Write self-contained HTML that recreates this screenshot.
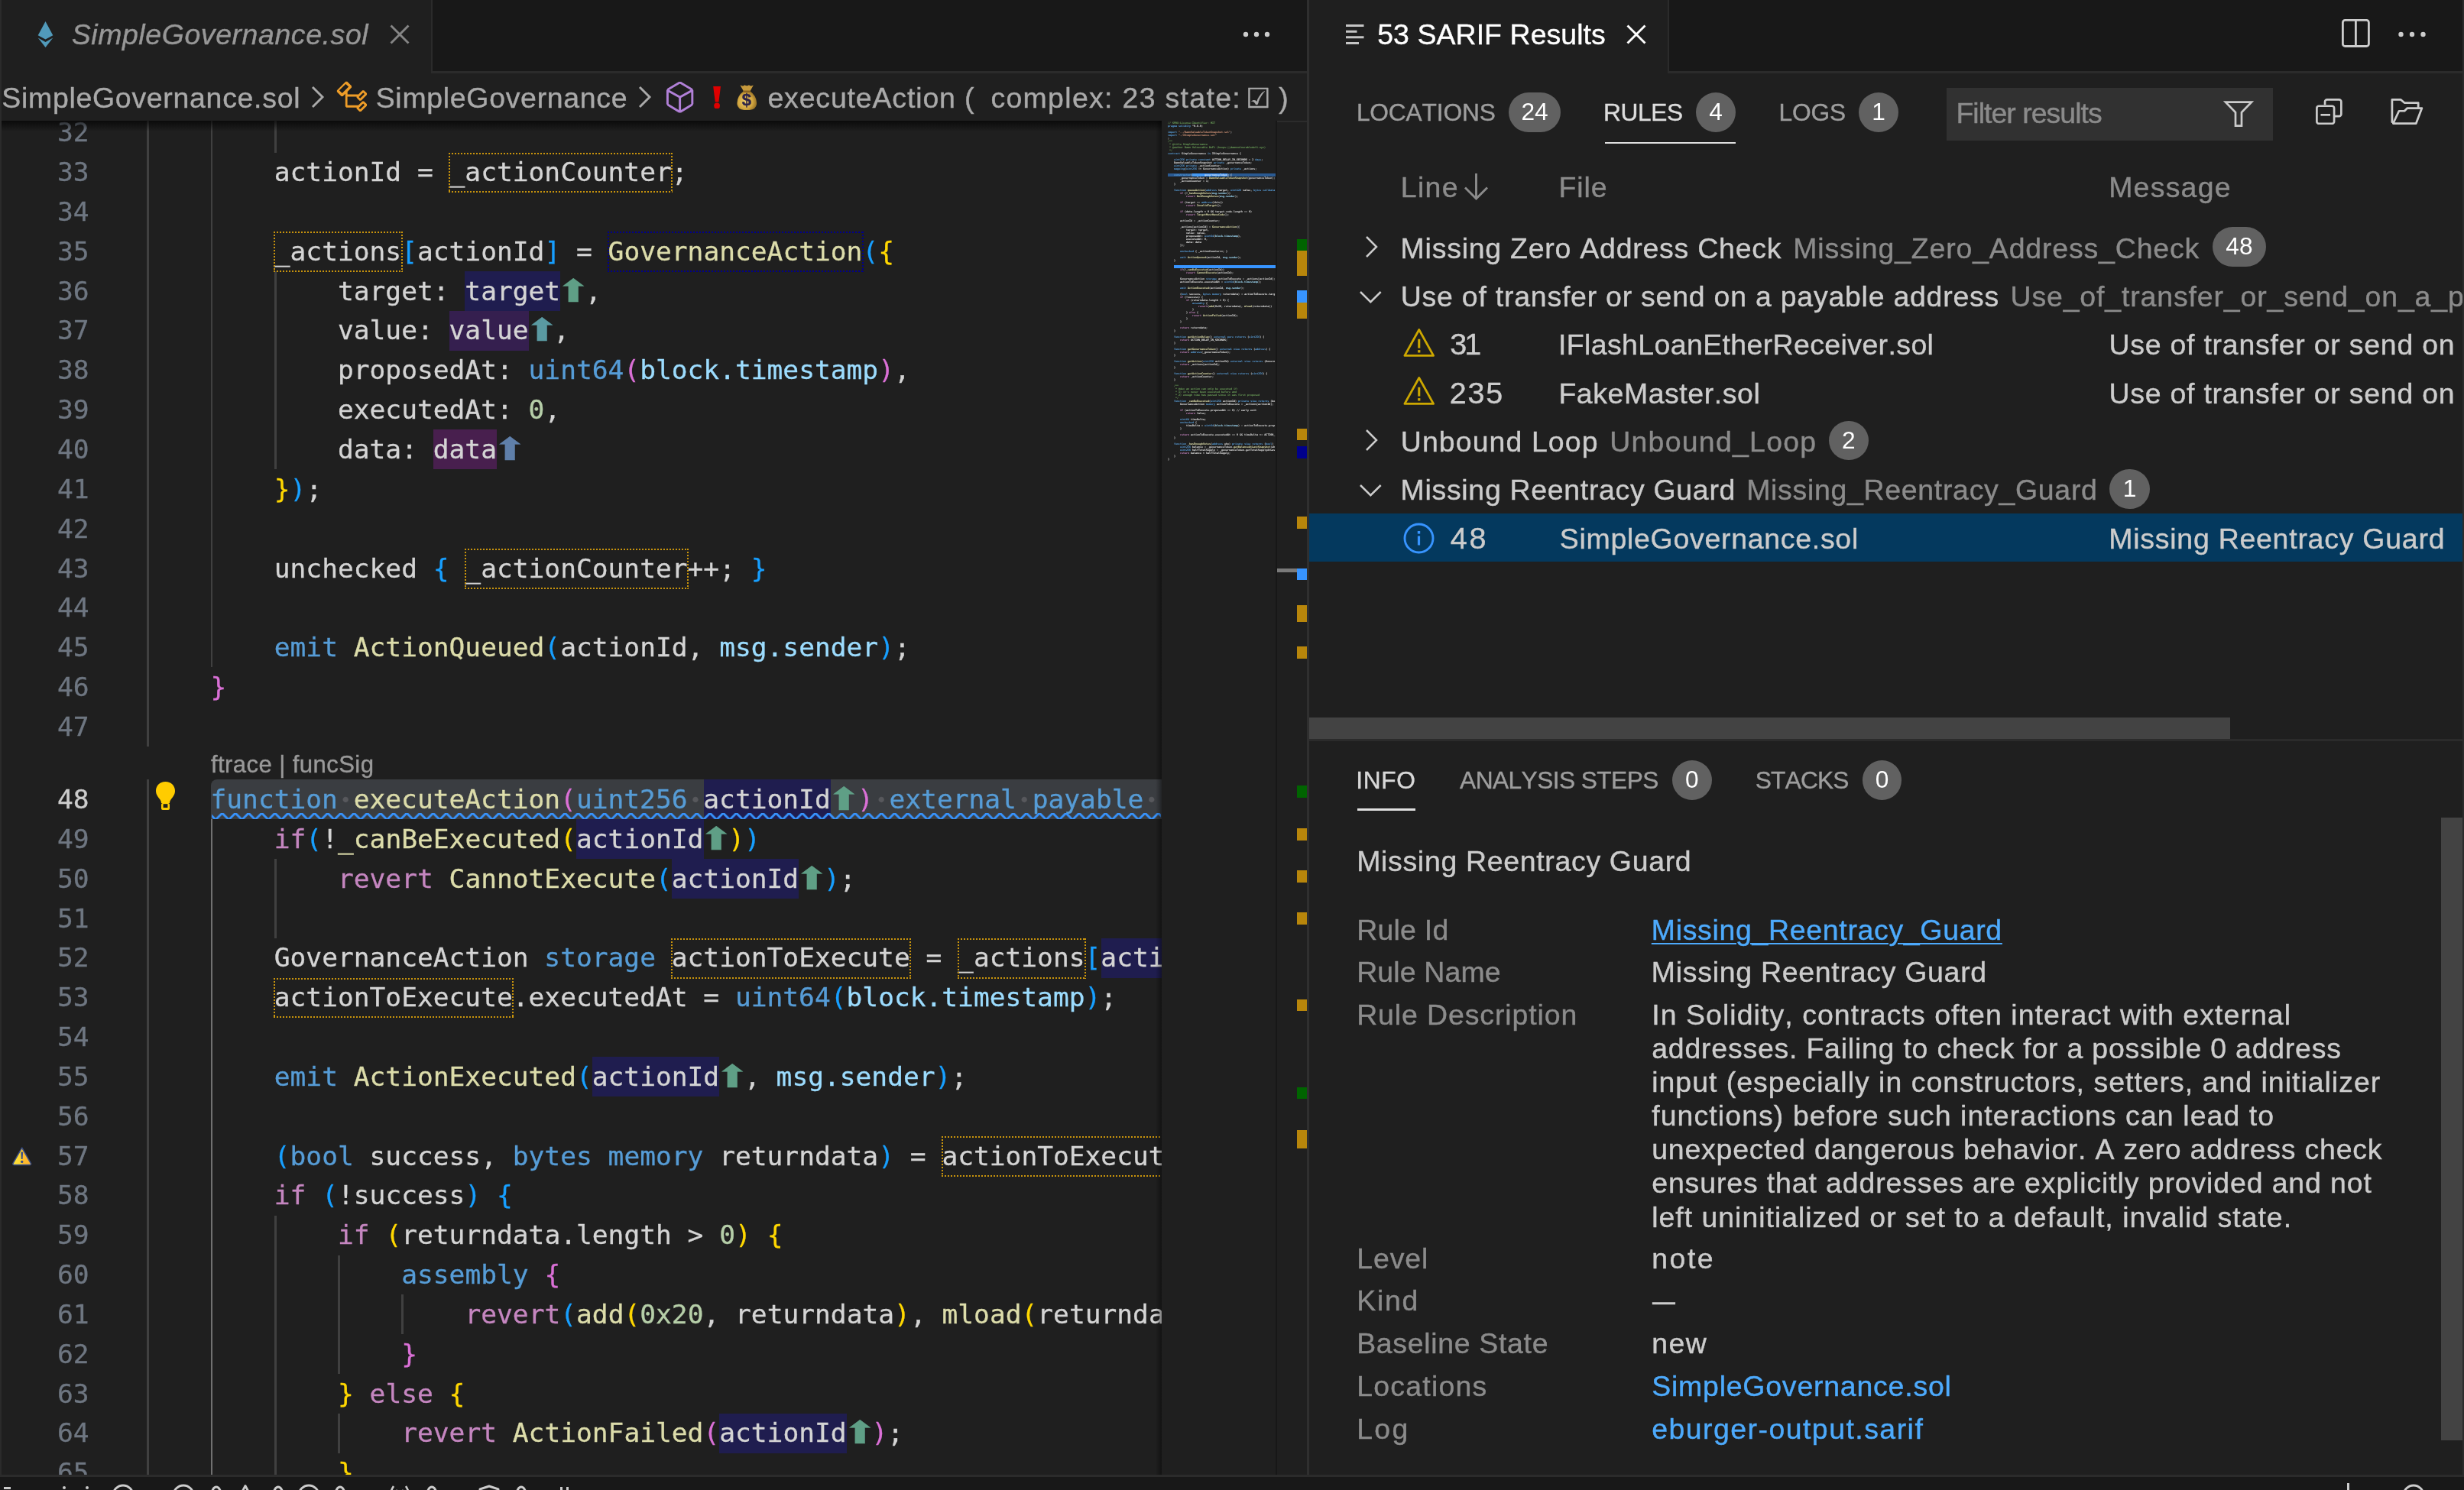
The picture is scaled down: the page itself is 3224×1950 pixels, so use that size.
<!DOCTYPE html>
<html lang="en"><head><meta charset="utf-8"><title>SimpleGovernance.sol</title>
<style>
*{box-sizing:border-box;margin:0;padding:0}
html,body{width:3224px;height:1950px;overflow:hidden;background:#1f1f1f}
body{will-change:transform;position:relative;font-family:"Liberation Sans",sans-serif;font-kerning:none;color:#ccc}
.abs,.t,.ic,.ln,.cl,.g,.bx{position:absolute}
.t{white-space:nowrap;-webkit-text-stroke:0.4px}
.bx{display:block}
.mono,.ln,.cl{font-family:"DejaVu Sans Mono","Liberation Mono",monospace;font-size:34.56px;line-height:51.84px;white-space:pre;height:51.84px}
.ln,.cl{padding-top:0.6px;-webkit-text-stroke:0.3px}
.ln{left:0;width:116.5px;text-align:right;color:#6e7681}
.ln.act{color:#ccc}
.cl{color:#d4d4d4}
.k{color:#569cd6}.f{color:#dcdcaa}.c{color:#c586c0}.v{color:#9cdcfe}.n{color:#b5cea8}
.b1{color:#ffd700}.b2{color:#da70d6}.b3{color:#179fff}
.ws{color:#57585c;display:inline-block;width:20.807px;height:51.84px;vertical-align:top;text-align:center;font-family:"Liberation Serif",serif;font-size:60px;line-height:51px}
.db{position:absolute;background:
 repeating-linear-gradient(90deg,var(--c) 0 2px,transparent 2px 4px) top left/100% 2px no-repeat,
 repeating-linear-gradient(90deg,var(--c) 0 2px,transparent 2px 4px) bottom left/100% 2px no-repeat,
 repeating-linear-gradient(180deg,var(--c) 0 2px,transparent 2px 4px) top left/2px 100% no-repeat,
 repeating-linear-gradient(180deg,var(--c) 0 2px,transparent 2px 4px) top right/2px 100% no-repeat}
.ar{display:inline-block;width:32.8px;text-align:center;vertical-align:top;height:51.84px;line-height:51.84px;font-family:"DejaVu Sans",sans-serif;font-size:41px}
.ar span{display:inline-block;transform:scaleX(1.35);line-height:51.84px}
.g{width:2.9px;background:#404040}
.g.ga{background:#707070}
.badge{position:absolute;height:51.8px;border-radius:26px;background:#616161;color:#fff;font-size:31.68px;line-height:51.8px;text-align:center}
#mm{position:absolute;z-index:0;left:1520px;top:158.6px;width:149.6px;height:1771.4px;overflow:hidden;font-family:"DejaVu Sans Mono","Liberation Mono",monospace;font-size:3.34px;line-height:4px;color:#e4e4e4;font-weight:bold}
#mm div{height:4px;padding-left:7.9px;width:149.6px;overflow:hidden;white-space:pre}
#mm .k{color:#5aa2e0}#mm .f{color:#e6e6b0}#mm .c{color:#d08acb}#mm .v{color:#a4e2ff}.mc{color:#70a85c}.ms{color:#d8987a}
</style></head>
<body>
<!-- left editor group -->
<div class="bx" style="left:0;top:0;width:1710px;height:93px;background:#181818"></div>
<div class="bx" style="left:0;top:93px;width:1710px;height:2.6px;background:#2b2b2b"></div>
<div class="bx" style="left:2px;top:0;width:564px;height:95.6px;background:#1f1f1f;border-right:2.6px solid #2b2b2b"></div>
<svg class="ic" style="left:49.0px;top:28.0px" width="21.0" height="34.0" viewBox="0 0 21 34" preserveAspectRatio="none" ><path d="M10.5 0 L20.3 18.2 L10.5 23.6 L0.7 18.2 Z" fill="#519aba"/><path d="M0.7 21.4 L10.5 27 L20.3 21.4 L10.5 34 Z" fill="#519aba"/></svg>
<div class="t " style="left:93.7px;top:21.4px;font-size:37.44px;line-height:48.67px;color:#979797;letter-spacing:0.603px;font-style:italic;">SimpleGovernance.sol</div>
<svg class="ic" style="left:509.3px;top:30.8px" width="28.0" height="28.0" viewBox="0 0 28 28" preserveAspectRatio="none" ><path d="M2.5 2.5 L25.5 25.5 M25.5 2.5 L2.5 25.5" stroke="#858585" stroke-width="2.9" fill="none"/></svg>
<svg class="ic" style="left:1624.0px;top:39.0px" width="42.0" height="12.0" viewBox="0 0 42 12" preserveAspectRatio="none" ><circle cx="6" cy="6" r="3.2" fill="#ccc"/><circle cx="20" cy="6" r="3.2" fill="#ccc"/><circle cx="34" cy="6" r="3.2" fill="#ccc"/></svg>
<div class="t " style="left:2.3px;top:103.7px;font-size:37.44px;line-height:48.67px;color:#a9a9a9;letter-spacing:0.723px;">SimpleGovernance.sol</div>
<svg class="ic" style="left:406.9px;top:112.2px" width="18.0" height="30.0" viewBox="0 0 18 30" preserveAspectRatio="none" ><path d="M2 2 L15 15 L2 28" stroke="#a9a9a9" stroke-width="2.9" fill="none"/></svg>
<svg class="ic" style="left:438.0px;top:104.1px" width="45.7" height="45.7" viewBox="0 0 16 16" preserveAspectRatio="none" ><path fill="#ee9d28" d="M11.34 9.71h.71l2.67-2.67v-.71L13.38 5h-.7l-1.82 1.81h-5V5.56l1.86-1.85V3l-2-2H5L1 5v.71l2 2h.71l1.14-1.15v5.79l.5.5H10v.52l1.33 1.34h.71l2.67-2.67v-.71L13.37 10h-.7l-1.86 1.85h-5v-4H10v.48l1.34 1.38zm1.69-3.65l.63.63-2 2-.63-.63 2-2zm-8-4l1.33 1.3-2.97 2.96-1.33-1.3 2.97-2.96zm8 9l.63.63-2 2-.63-.63 2-2z"/></svg>
<div class="t " style="left:491.7px;top:103.7px;font-size:37.44px;line-height:48.67px;color:#a9a9a9;letter-spacing:0.711px;">SimpleGovernance</div>
<svg class="ic" style="left:834.9px;top:112.2px" width="18.0" height="30.0" viewBox="0 0 18 30" preserveAspectRatio="none" ><path d="M2 2 L15 15 L2 28" stroke="#a9a9a9" stroke-width="2.9" fill="none"/></svg>
<svg class="ic" style="left:865.9px;top:103.8px" width="47.2" height="47.2" viewBox="0 0 16 16" preserveAspectRatio="none" ><path fill="#b180d7" d="M13.51 4l-5-3h-1l-5 3-.49.86v6l.49.85 5 3h1l5-3 .49-.85v-6L13.51 4zm-6 9.56l-4.5-2.7V5.7l4.5 2.45v5.41zM3.27 4.7l4.74-2.84 4.74 2.84-4.74 2.59L3.27 4.7zm9.74 6.16l-4.5 2.7V8.15l4.5-2.45v5.16z"/></svg>
<svg class="ic" style="left:933.4px;top:112.9px" width="10.2" height="29.4" viewBox="0 0 10.2 29.4" preserveAspectRatio="none" ><path d="M0.2 0 H10 L7.4 20.4 H2.8 Z" fill="#de0000"/><circle cx="5.1" cy="25.5" r="3.9" fill="#de0000"/></svg>
<svg class="ic" style="left:963.6px;top:109.8px" width="26.4" height="34.6" viewBox="0 0 26.4 34.6" preserveAspectRatio="none" ><defs><radialGradient id="mb" cx="0.42" cy="0.55" r="0.62"><stop offset="0" stop-color="#f1d06a"/><stop offset="0.6" stop-color="#d2a640"/><stop offset="1" stop-color="#8f6a22"/></radialGradient></defs><path d="M4.5 1.6 Q8 3.4 10.5 1.2 Q13.2 3.2 16 1.2 Q18.6 3.4 21.8 1.6 L17.4 9.6 H9 Z" fill="#c79a3c"/><path d="M9 9.2 H17.4 Q26.6 16 26 26.4 Q25 34.2 13.2 34.2 Q1.4 34.2 0.5 26.4 Q-0.2 16 9 9.2 Z" fill="url(#mb)"/><rect x="8.4" y="8.4" width="9.6" height="2.4" rx="1" fill="#8a6220"/></svg>
<div class="t" style="left:963.6px;top:120.2px;width:26.4px;text-align:center;font-size:22px;line-height:21px;font-weight:bold;color:#2c2348">$</div>
<div class="t " style="left:1004.4px;top:103.7px;font-size:37.44px;line-height:48.67px;color:#a9a9a9;letter-spacing:0.868px;">executeAction (</div>
<div class="t " style="left:1296.4px;top:103.7px;font-size:37.44px;line-height:48.67px;color:#a9a9a9;letter-spacing:1.334px;">complex: 23 state:</div>
<div class="t" style="left:1630.3px;top:104.5px;font-family:'DejaVu Sans',sans-serif;font-size:36px;line-height:48px;color:#a9a9a9">☑</div>
<div class="t " style="left:1673.3px;top:103.7px;font-size:37.44px;line-height:48.67px;color:#a9a9a9;letter-spacing:0.000px;">)</div>
<!-- editor -->
<div class="bx" id="ed" style="left:0;top:158.4px;width:1520px;height:1771.6px;overflow:hidden">
<div class="bx" style="left:0;top:-158.4px;width:1710px;height:1950px">
<div class="bx" style="left:275.5px;top:1020.42px;width:1245px;height:51.84px;background:#3a3d41;border-top-left-radius:8px"></div>
<div class="g" style="left:192.30px;top:147.68px;height:829.44px"></div>
<div class="g" style="left:192.30px;top:1020.42px;height:933.12px"></div>
<div class="g" style="left:275.53px;top:147.68px;height:725.76px"></div>
<div class="g ga" style="left:275.53px;top:1072.26px;height:881.28px"></div>
<div class="g" style="left:358.76px;top:147.68px;height:51.84px"></div>
<div class="g" style="left:358.76px;top:355.04px;height:259.20px"></div>
<div class="g" style="left:358.76px;top:1124.10px;height:103.68px"></div>
<div class="g" style="left:358.76px;top:1590.66px;height:362.88px"></div>
<div class="g" style="left:441.98px;top:1642.50px;height:155.52px"></div>
<div class="g" style="left:441.98px;top:1849.86px;height:51.84px"></div>
<div class="g" style="left:525.21px;top:1694.34px;height:51.84px"></div>
<div class="bx" style="left:608.4px;top:355.0px;width:124.8px;height:51.8px;background:#1f1d4f"></div>
<div class="bx" style="left:587.6px;top:406.9px;width:104.0px;height:51.8px;background:#351f4f"></div>
<div class="bx" style="left:566.8px;top:562.4px;width:83.2px;height:51.8px;background:#481f4e"></div>
<div class="bx" style="left:920.5px;top:1020.4px;width:166.5px;height:51.8px;background:#1f1d4f"></div>
<div class="bx" style="left:754.1px;top:1072.3px;width:166.5px;height:51.8px;background:#1f1d4f"></div>
<div class="bx" style="left:878.9px;top:1124.1px;width:166.5px;height:51.8px;background:#1f1d4f"></div>
<div class="bx" style="left:1440.7px;top:1227.8px;width:166.5px;height:51.8px;background:#1f1d4f"></div>
<div class="bx" style="left:774.9px;top:1383.3px;width:166.5px;height:51.8px;background:#1f1d4f"></div>
<div class="bx" style="left:941.4px;top:1849.9px;width:166.5px;height:51.8px;background:#1f1d4f"></div>
<div class="ln" style="top:147.68px">32</div>
<div class="ln" style="top:199.52px">33</div>
<div class="cl" style="top:199.52px;left:358.76px">actionId = _actionCounter;</div>
<div class="ln" style="top:251.36px">34</div>
<div class="ln" style="top:303.20px">35</div>
<div class="cl" style="top:303.20px;left:358.76px">_actions<span class="b3">[</span>actionId<span class="b3">]</span> = <span class="f">GovernanceAction</span><span class="b3">(</span><span class="b1">{</span></div>
<div class="ln" style="top:355.04px">36</div>
<div class="cl" style="top:355.04px;left:441.98px">target: target<span class="ar" style="color:#5f9f86"><span>⬆</span></span>,</div>
<div class="ln" style="top:406.88px">37</div>
<div class="cl" style="top:406.88px;left:441.98px">value: value<span class="ar" style="color:#5a9aa2"><span>⬆</span></span>,</div>
<div class="ln" style="top:458.72px">38</div>
<div class="cl" style="top:458.72px;left:441.98px">proposedAt: <span class="k">uint64</span><span class="b2">(</span><span class="v">block.timestamp</span><span class="b2">)</span>,</div>
<div class="ln" style="top:510.56px">39</div>
<div class="cl" style="top:510.56px;left:441.98px">executedAt: <span class="n">0</span>,</div>
<div class="ln" style="top:562.40px">40</div>
<div class="cl" style="top:562.40px;left:441.98px">data: data<span class="ar" style="color:#5f7fa9"><span>⬆</span></span></div>
<div class="ln" style="top:614.24px">41</div>
<div class="cl" style="top:614.24px;left:358.76px"><span class="b1">}</span><span class="b3">)</span>;</div>
<div class="ln" style="top:666.08px">42</div>
<div class="ln" style="top:717.92px">43</div>
<div class="cl" style="top:717.92px;left:358.76px">unchecked <span class="b3">{</span> _actionCounter++; <span class="b3">}</span></div>
<div class="ln" style="top:769.76px">44</div>
<div class="ln" style="top:821.60px">45</div>
<div class="cl" style="top:821.60px;left:358.76px"><span class="k">emit</span> <span class="f">ActionQueued</span><span class="b3">(</span>actionId, <span class="v">msg.sender</span><span class="b3">)</span>;</div>
<div class="ln" style="top:873.44px">46</div>
<div class="cl" style="top:873.44px;left:275.53px"><span class="b2">}</span></div>
<div class="ln" style="top:925.28px">47</div>
<div class="ln act" style="top:1020.42px">48</div>
<div class="cl" style="top:1020.42px;left:275.53px"><span class="k">function</span><span class="ws">·</span><span class="f">executeAction</span><span class="b2">(</span><span class="k">uint256</span><span class="ws">·</span>actionId<span class="ar" style="color:#5f9f86"><span>⬆</span></span><span style="display:inline-block;width:2.4px"></span><span class="b2">)</span><span class="ws">·</span><span class="k">external</span><span class="ws">·</span><span class="k">payable</span><span class="ws">·</span><span class="k">returns</span><span class="ws">·</span><span class="b2">(</span><span class="k">bytes</span><span class="ws">·</span><span class="k">memory</span><span class="ws">·</span>returndata<span class="b2">)</span><span class="ws">·</span><span class="b2">{</span></div>
<div class="ln" style="top:1072.26px">49</div>
<div class="cl" style="top:1072.26px;left:358.76px"><span class="c">if</span><span class="b3">(</span>!<span class="f">_canBeExecuted</span><span class="b1">(</span>actionId<span class="ar" style="color:#5f9f86"><span>⬆</span></span><span class="b1">)</span><span class="b3">)</span></div>
<div class="ln" style="top:1124.10px">50</div>
<div class="cl" style="top:1124.10px;left:441.98px"><span class="c">revert</span> <span class="f">CannotExecute</span><span class="b3">(</span>actionId<span class="ar" style="color:#5f9f86"><span>⬆</span></span><span class="b3">)</span>;</div>
<div class="ln" style="top:1175.94px">51</div>
<div class="ln" style="top:1227.78px">52</div>
<div class="cl" style="top:1227.78px;left:358.76px">GovernanceAction <span class="k">storage</span> actionToExecute = _actions<span class="b3">[</span>actionId<span class="ar" style="color:#5f9f86"><span>⬆</span></span><span class="b3">]</span>;</div>
<div class="ln" style="top:1279.62px">53</div>
<div class="cl" style="top:1279.62px;left:358.76px">actionToExecute.executedAt = <span class="k">uint64</span><span class="b3">(</span><span class="v">block.timestamp</span><span class="b3">)</span>;</div>
<div class="ln" style="top:1331.46px">54</div>
<div class="ln" style="top:1383.30px">55</div>
<div class="cl" style="top:1383.30px;left:358.76px"><span class="k">emit</span> <span class="f">ActionExecuted</span><span class="b3">(</span>actionId<span class="ar" style="color:#5f9f86"><span>⬆</span></span>, <span class="v">msg.sender</span><span class="b3">)</span>;</div>
<div class="ln" style="top:1435.14px">56</div>
<div class="ln" style="top:1486.98px">57</div>
<div class="cl" style="top:1486.98px;left:358.76px"><span class="b3">(</span><span class="k">bool</span> success, <span class="k">bytes</span> <span class="k">memory</span> returndata<span class="b3">)</span> = actionToExecute.target.call<span class="b3">{</span>value: actionToExecute.value<span class="b3">}</span><span class="b3">(</span>actionToExecute.data<span class="b3">)</span>;</div>
<div class="ln" style="top:1538.82px">58</div>
<div class="cl" style="top:1538.82px;left:358.76px"><span class="c">if</span> <span class="b3">(</span>!success<span class="b3">)</span> <span class="b3">{</span></div>
<div class="ln" style="top:1590.66px">59</div>
<div class="cl" style="top:1590.66px;left:441.98px"><span class="c">if</span> <span class="b1">(</span>returndata.length &gt; <span class="n">0</span><span class="b1">)</span> <span class="b1">{</span></div>
<div class="ln" style="top:1642.50px">60</div>
<div class="cl" style="top:1642.50px;left:525.21px"><span class="k">assembly</span> <span class="b2">{</span></div>
<div class="ln" style="top:1694.34px">61</div>
<div class="cl" style="top:1694.34px;left:608.44px"><span class="c">revert</span><span class="b3">(</span><span class="f">add</span><span class="b1">(</span><span class="n">0x20</span>, returndata<span class="b1">)</span>, <span class="f">mload</span><span class="b1">(</span>returndata<span class="b1">)</span><span class="b3">)</span></div>
<div class="ln" style="top:1746.18px">62</div>
<div class="cl" style="top:1746.18px;left:525.21px"><span class="b2">}</span></div>
<div class="ln" style="top:1798.02px">63</div>
<div class="cl" style="top:1798.02px;left:441.98px"><span class="b1">}</span> <span class="c">else</span> <span class="b1">{</span></div>
<div class="ln" style="top:1849.86px">64</div>
<div class="cl" style="top:1849.86px;left:525.21px"><span class="c">revert</span> <span class="f">ActionFailed</span><span class="b2">(</span>actionId<span class="ar" style="color:#5f9f86"><span>⬆</span></span><span class="b2">)</span>;</div>
<div class="ln" style="top:1901.70px">65</div>
<div class="cl" style="top:1901.70px;left:441.98px"><span class="b1">}</span></div>
<div class="db" style="left:587px;top:200px;width:293px;height:52px;--c:#c9940c"></div>
<div class="db" style="left:358px;top:303px;width:169px;height:53px;--c:#c9940c"></div>
<div class="db" style="left:795px;top:303px;width:335px;height:53px;--c:#00008b"></div>
<div class="db" style="left:608px;top:718px;width:293px;height:53px;--c:#c9940c"></div>
<div class="db" style="left:878px;top:1228px;width:314px;height:53px;--c:#c9940c"></div>
<div class="db" style="left:1253px;top:1228px;width:168px;height:53px;--c:#c9940c"></div>
<div class="db" style="left:358px;top:1280px;width:314px;height:52px;--c:#c9940c"></div>
<div class="db" style="left:1232px;top:1487px;width:314px;height:53px;--c:#c9940c"></div>
<div class="db" style="left:1960px;top:1487px;width:314px;height:53px;--c:#c9940c"></div>
<div class="db" style="left:2439px;top:1487px;width:314px;height:53px;--c:#c9940c"></div>
<div class="t " style="left:275.9px;top:980.6px;font-size:31.10px;line-height:40.43px;color:#999;letter-spacing:0.418px;">ftrace | funcSig</div>
<svg class="ic" style="left:276px;top:1063.62px" width="1244" height="8.64" viewBox="0 0 1244 8.64"><defs><pattern id="sq" width="17.28" height="8.64" patternUnits="userSpaceOnUse"><g transform="scale(2.88)" fill="#3794ff"><polygon points="5.5,0 2.5,3 1.1,3 4.1,0"/><polygon points="4,0 6,2 6,0.6 5.4,0"/><polygon points="0,2 1,3 2.4,3 0,0.6"/></g></pattern></defs><rect width="1244" height="8.64" fill="url(#sq)"/></svg>
<svg class="ic" style="left:203.0px;top:1022.4px" width="27.0" height="40.0" viewBox="0 0 27 40" preserveAspectRatio="none" ><path d="M13.5 1 C6 1 1 6.5 1 13 C1 18 4 21 6.5 24.5 C7.6 26 8 27.5 8 29 L19 29 C19 27.5 19.4 26 20.5 24.5 C23 21 26 18 26 13 C26 6.5 21 1 13.5 1 Z" fill="#ffcc00"/><rect x="8" y="29" width="11" height="9" rx="2" fill="#ffcc00"/><rect x="10.6" y="30.2" width="5.8" height="4.8" fill="#1f1f1f"/></svg>
<svg class="ic" style="left:14.5px;top:1500.2px" width="27.4" height="26.0" viewBox="0 0 27.4 26" preserveAspectRatio="none" ><defs><linearGradient id="wg" x1="0" x2="1" y1="0" y2="0"><stop offset="0" stop-color="#ffe43a"/><stop offset="0.49" stop-color="#ffd42f"/><stop offset="0.5" stop-color="#ffbf2e"/><stop offset="1" stop-color="#ffb52e"/></linearGradient></defs><path d="M13.7 2.2 L25.4 22.6 Q26 24.3 24.2 24.4 H3.2 Q1.4 24.3 2 22.6 Z" fill="url(#wg)" stroke="#3b4f86" stroke-width="1.5" stroke-linejoin="round"/><path d="M12.3 8 Q13.7 6.6 15.1 8 L14.6 17 H12.8 Z" fill="#3b4f86"/><circle cx="13.7" cy="20.4" r="1.7" fill="#3b4f86"/></svg>
</div>
<div class="bx" style="left:0;top:0;width:1670px;height:14px;background:linear-gradient(#000a,#0000)"></div>
</div>
<!-- minimap -->
<div class="bx" style="left:1512px;top:158.4px;width:8px;height:1771.6px;background:linear-gradient(90deg,#0000,#0006)"></div>
<div id="mm">
<div class="bx" style="position:absolute;z-index:-1;left:7.9px;top:68px;width:141.7px;height:4px;padding:0;background:#2a5a92"></div>
<div class="bx" style="position:absolute;z-index:-1;left:39.6px;top:68px;width:46.2px;height:4px;padding:0;background:#3794ff"></div>
<div class="bx" style="position:absolute;left:15.9px;top:188px;width:133.7px;height:4px;padding:0;background:#3794ff"></div>
<div><span class="mc">// SPDX-License-Identifier: MIT</span></div>
<div><span class="k">pragma</span> <span class="k">solidity</span> ^0.8.0;</div>
<div></div>
<div><span class="k">import</span> <span class="ms">"../DamnValuableTokenSnapshot.sol"</span>;</div>
<div><span class="k">import</span> <span class="ms">"./ISimpleGovernance.sol"</span></div>
<div>;</div>
<div><span class="mc">/**</span></div>
<div><span class="mc"> * @title SimpleGovernance</span></div>
<div><span class="mc"> * @author Damn Vulnerable DeFi (hxxps:||damnvulnerabledefi.xyz)</span></div>
<div><span class="mc"> */</span></div>
<div><span class="k">contract</span> SimpleGovernance <span class="k">is</span> ISimpleGovernance {</div>
<div></div>
<div>    <span class="k">uint256</span> <span class="k">private</span> <span class="k">constant</span> ACTION_DELAY_IN_SECONDS = 2 <span class="k">days</span>;</div>
<div>    DamnValuableTokenSnapshot <span class="k">private</span> _governanceToken;</div>
<div>    <span class="k">uint256</span> <span class="k">private</span> _actionCounter;</div>
<div>    <span class="k">mapping</span>(<span class="k">uint256</span> =&gt; GovernanceAction) <span class="k">private</span> _actions;</div>
<div></div>
<div>    <span class="k">constructor</span>(<span class="k">address</span> governanceToken) {</div>
<div>        _governanceToken = <span class="f">DamnValuableTokenSnapshot</span>(governanceToken);</div>
<div>        _actionCounter = 1;</div>
<div>    }</div>
<div></div>
<div>    <span class="k">function</span> <span class="f">queueAction</span>(<span class="k">address</span> target, <span class="k">uint128</span> value, <span class="k">bytes</span> <span class="k">calldata</span></div>
<div>        <span class="c">if</span> (!<span class="f">_hasEnoughVotes</span>(<span class="v">msg.sender</span>))</div>
<div>            <span class="c">revert</span> <span class="f">NotEnoughVotes</span>(<span class="v">msg.sender</span>);</div>
<div></div>
<div>        <span class="c">if</span> (target == <span class="k">address</span>(this))</div>
<div>            <span class="c">revert</span> <span class="f">InvalidTarget</span>();</div>
<div></div>
<div>        <span class="c">if</span> (data.length &gt; 0 &amp;&amp; target.code.length == 0)</div>
<div>            <span class="c">revert</span> <span class="f">TargetMustHaveCode</span>();</div>
<div></div>
<div>        actionId = _actionCounter;</div>
<div></div>
<div>        _actions[actionId] = <span class="f">GovernanceAction</span>({</div>
<div>            target: target,</div>
<div>            value: value,</div>
<div>            proposedAt: <span class="k">uint64</span>(<span class="v">block.timestamp</span>),</div>
<div>            executedAt: 0,</div>
<div>            data: data</div>
<div>        });</div>
<div></div>
<div>        <span class="k">unchecked</span> { _actionCounter++; }</div>
<div></div>
<div>        <span class="k">emit</span> <span class="f">ActionQueued</span>(actionId, <span class="v">msg.sender</span>);</div>
<div>    }</div>
<div></div>
<div>    <span class="k">function</span> <span class="f">executeAction</span>(<span class="k">uint256</span> actionId) <span class="k">external</span> <span class="k">payable</span> <span class="k">returns</span> </div>
<div>        <span class="c">if</span>(!<span class="f">_canBeExecuted</span>(actionId))</div>
<div>            <span class="c">revert</span> <span class="f">CannotExecute</span>(actionId);</div>
<div></div>
<div>        GovernanceAction <span class="k">storage</span> actionToExecute = _actions[actionId];</div>
<div>        actionToExecute.executedAt = <span class="k">uint64</span>(<span class="v">block.timestamp</span>);</div>
<div></div>
<div>        <span class="k">emit</span> <span class="f">ActionExecuted</span>(actionId, <span class="v">msg.sender</span>);</div>
<div></div>
<div>        (<span class="k">bool</span> success, <span class="k">bytes</span> <span class="k">memory</span> returndata) = actionToExecute.targ</div>
<div>        <span class="c">if</span> (!success) {</div>
<div>            <span class="c">if</span> (returndata.length &gt; 0) {</div>
<div>                <span class="k">assembly</span> {</div>
<div>                    <span class="c">revert</span>(<span class="f">add</span>(0x20, returndata), <span class="f">mload</span>(returndata))</div>
<div>                }</div>
<div>            } <span class="c">else</span> {</div>
<div>                <span class="c">revert</span> <span class="f">ActionFailed</span>(actionId);</div>
<div>            }</div>
<div>        }</div>
<div></div>
<div>        <span class="c">return</span> returndata;</div>
<div>    }</div>
<div></div>
<div>    <span class="k">function</span> <span class="f">getActionDelay</span>() <span class="k">external</span> <span class="k">pure</span> <span class="k">returns</span> (<span class="k">uint256</span>) {</div>
<div>        <span class="c">return</span> ACTION_DELAY_IN_SECONDS;</div>
<div>    }</div>
<div></div>
<div>    <span class="k">function</span> <span class="f">getGovernanceToken</span>() <span class="k">external</span> <span class="k">view</span> <span class="k">returns</span> (<span class="k">address</span>) {</div>
<div>        <span class="c">return</span> <span class="k">address</span>(_governanceToken);</div>
<div>    }</div>
<div></div>
<div>    <span class="k">function</span> <span class="f">getAction</span>(<span class="k">uint256</span> actionId) <span class="k">external</span> <span class="k">view</span> <span class="k">returns</span> (Govern</div>
<div>        <span class="c">return</span> _actions[actionId];</div>
<div>    }</div>
<div></div>
<div>    <span class="k">function</span> <span class="f">getActionCounter</span>() <span class="k">external</span> <span class="k">view</span> <span class="k">returns</span> (<span class="k">uint256</span>) {</div>
<div>        <span class="c">return</span> _actionCounter;</div>
<div>    }</div>
<div></div>
<div><span class="mc">    /**</span></div>
<div><span class="mc">     * @dev an action can only be executed if:</span></div>
<div><span class="mc">     * 1) it's never been executed before and</span></div>
<div><span class="mc">     * 2) enough time has passed since it was first proposed</span></div>
<div><span class="mc">     */</span></div>
<div>    <span class="k">function</span> <span class="f">_canBeExecuted</span>(<span class="k">uint256</span> actionId) <span class="k">private</span> <span class="k">view</span> <span class="k">returns</span> (bo</div>
<div>        GovernanceAction <span class="k">memory</span> actionToExecute = _actions[actionId];</div>
<div></div>
<div>        <span class="c">if</span> (actionToExecute.proposedAt == 0) // early exit</div>
<div>            <span class="c">return</span> false;</div>
<div></div>
<div>        <span class="k">uint64</span> timeDelta;</div>
<div>        <span class="k">unchecked</span> {</div>
<div>            timeDelta = <span class="k">uint64</span>(<span class="v">block.timestamp</span>) - actionToExecute.prop</div>
<div>        }</div>
<div></div>
<div>        <span class="c">return</span> actionToExecute.executedAt == 0 &amp;&amp; timeDelta &gt;= ACTION_</div>
<div>    }</div>
<div></div>
<div>    <span class="k">function</span> <span class="f">_hasEnoughVotes</span>(<span class="k">address</span> who) <span class="k">private</span> <span class="k">view</span> <span class="k">returns</span> (<span class="k">bool</span>) </div>
<div>        <span class="k">uint256</span> balance = _governanceToken.<span class="f">getBalanceAtLastSnapshot</span>(wh</div>
<div>        <span class="k">uint256</span> halfTotalSupply = _governanceToken.getTotalSupplyAtLas</div>
<div>        <span class="c">return</span> balance &gt; halfTotalSupply;</div>
<div>    }</div>
<div>}</div>
</div>
<!-- overview ruler -->
<div class="bx" style="left:1696.8px;top:313.1px;width:13.2px;height:15.1px;background:#006400"></div>
<div class="bx" style="left:1696.8px;top:328.2px;width:13.2px;height:32.8px;background:#b8860b"></div>
<div class="bx" style="left:1696.8px;top:380.1px;width:13.2px;height:16.1px;background:#3794ff"></div>
<div class="bx" style="left:1696.8px;top:396.2px;width:13.2px;height:20.7px;background:#b8860b"></div>
<div class="bx" style="left:1696.8px;top:561.4px;width:13.2px;height:15.1px;background:#b8860b"></div>
<div class="bx" style="left:1696.8px;top:584.0px;width:13.2px;height:16.1px;background:#00008b"></div>
<div class="bx" style="left:1696.8px;top:676.1px;width:13.2px;height:16.1px;background:#b8860b"></div>
<div class="bx" style="left:1696.8px;top:743.8px;width:13.2px;height:15.1px;background:#3794ff"></div>
<div class="bx" style="left:1696.8px;top:791.6px;width:13.2px;height:22.7px;background:#b8860b"></div>
<div class="bx" style="left:1696.8px;top:846.0px;width:13.2px;height:16.1px;background:#b8860b"></div>
<div class="bx" style="left:1696.8px;top:1028.2px;width:13.2px;height:15.7px;background:#006400"></div>
<div class="bx" style="left:1696.8px;top:1084.1px;width:13.2px;height:16.1px;background:#b8860b"></div>
<div class="bx" style="left:1696.8px;top:1139.0px;width:13.2px;height:16.1px;background:#b8860b"></div>
<div class="bx" style="left:1696.8px;top:1194.4px;width:13.2px;height:15.6px;background:#b8860b"></div>
<div class="bx" style="left:1696.8px;top:1307.7px;width:13.2px;height:15.6px;background:#b8860b"></div>
<div class="bx" style="left:1696.8px;top:1422.5px;width:13.2px;height:15.6px;background:#006400"></div>
<div class="bx" style="left:1696.8px;top:1479.4px;width:13.2px;height:23.5px;background:#b8860b"></div>
<div class="bx" style="left:1671px;top:743.8px;width:25.8px;height:5px;background:#7a7a7a"></div>
<div class="bx" style="left:1669.2px;top:1020.4px;width:2px;height:51px;background:#3e4452"></div>
<div class="bx" style="left:1669.4px;top:158.4px;width:1.6px;height:1771.6px;background:#171717"></div>
<div class="bx" style="left:1671px;top:158.4px;width:39px;height:1.3px;background:#2c2c2c"></div>
<div class="bx" style="left:0;top:0;width:2px;height:1930px;background:#2b2b2b"></div>
<div class="bx" style="left:1710px;top:0;width:3px;height:1930px;background:#2f2f2f"></div>
<!-- right editor group: SARIF viewer -->
<div class="bx" style="left:1713px;top:0;width:1511px;height:93px;background:#181818"></div>
<div class="bx" style="left:1713px;top:93px;width:1511px;height:2.6px;background:#2b2b2b"></div>
<div class="bx" style="left:1713px;top:0;width:470.5px;height:95.6px;background:#1f1f1f;border-right:2.6px solid #2b2b2b"></div>
<svg class="ic" style="left:1761.0px;top:32.0px" width="24.0" height="26.0" viewBox="0 0 24 26" preserveAspectRatio="none" ><path d="M0 1.6 H23.5 M0 9.2 H14.5 M0 16.8 H23.5 M0 24.4 H17" stroke="#c5c5c5" stroke-width="3" fill="none"/></svg>
<div class="t " style="left:1802.2px;top:21.2px;font-size:37.44px;line-height:48.67px;color:#fff;letter-spacing:0.080px;">53 SARIF Results</div>
<svg class="ic" style="left:2127.0px;top:31.2px" width="28.0" height="28.0" viewBox="0 0 28 28" preserveAspectRatio="none" ><path d="M2.5 2.5 L25.5 25.5 M25.5 2.5 L2.5 25.5" stroke="#fff" stroke-width="2.9" fill="none"/></svg>
<svg class="ic" style="left:3064.1px;top:24.9px" width="36.8" height="36.9" viewBox="0 0 36.8 36.8" preserveAspectRatio="none" ><rect x="1.4" y="1.4" width="34" height="34" rx="3" stroke="#ccc" stroke-width="2.8" fill="none"/><path d="M18.4 1.4 V35.4" stroke="#ccc" stroke-width="2.8"/></svg>
<svg class="ic" style="left:3135.0px;top:39.0px" width="42.0" height="12.0" viewBox="0 0 42 12" preserveAspectRatio="none" ><circle cx="6.5" cy="6" r="3.2" fill="#ccc"/><circle cx="21" cy="6" r="3.2" fill="#ccc"/><circle cx="35.5" cy="6" r="3.2" fill="#ccc"/></svg>
<div class="t " style="left:1774.9px;top:127.0px;font-size:31.68px;line-height:41.18px;color:#9d9d9d;letter-spacing:-0.140px;">LOCATIONS</div>
<div class="badge" style="left:1974.3px;top:121.3px;width:67.4px">24</div>
<div class="t " style="left:2098.0px;top:127.0px;font-size:31.68px;line-height:41.18px;color:#dcdcdc;letter-spacing:-0.346px;">RULES</div>
<div class="badge" style="left:2218.9px;top:121.3px;width:52.3px">4</div>
<div class="bx" style="left:2100px;top:185.5px;width:171.2px;height:2.7px;background:#e0e0e0"></div>
<div class="t " style="left:2327.6px;top:127.0px;font-size:31.68px;line-height:41.18px;color:#9d9d9d;letter-spacing:-0.160px;">LOGS</div>
<div class="badge" style="left:2431.9px;top:121.3px;width:52.3px">1</div>
<div class="bx" style="left:2547px;top:115px;width:427px;height:68.8px;background:#313131"></div>
<div class="t " style="left:2559.4px;top:123.9px;font-size:37.44px;line-height:48.67px;color:#8b8b8b;letter-spacing:-0.958px;">Filter results</div>
<svg class="ic" style="left:2907.6px;top:130.6px" width="42.0" height="36.0" viewBox="0 0 42 36" preserveAspectRatio="none" ><path d="M4 2.6 H38 L25 16 V33.6 H17 V16 Z" stroke="#ccc" stroke-width="2.7" fill="none" stroke-linejoin="miter"/></svg>
<svg class="ic" style="left:3030.1px;top:128.8px" width="35.2" height="34.3" viewBox="0 0 38 37" preserveAspectRatio="none" ><path d="M13 9 V4.5 a3 3 0 0 1 3 -3 H33 a3 3 0 0 1 3 3 V22 a3 3 0 0 1 -3 3 H26" stroke="#ccc" stroke-width="2.9" fill="none"/><rect x="1.5" y="10.5" width="24.5" height="25" rx="3" stroke="#ccc" stroke-width="2.9" fill="none"/><path d="M7 23 H20.5" stroke="#ccc" stroke-width="2.9"/></svg>
<svg class="ic" style="left:3128.0px;top:128.8px" width="42.8" height="34.4" viewBox="0 0 45 37" preserveAspectRatio="none" ><path d="M4 33 L2 33 L2 1.5 H14 L19 6 H38 V13.5" stroke="#ccc" stroke-width="2.9" fill="none" stroke-linejoin="round"/><path d="M3.5 35 L11.5 17.5 H19 L23 13.5 H43 L35 35 Z" stroke="#ccc" stroke-width="2.9" fill="none" stroke-linejoin="round"/></svg>
<div class="t " style="left:1832.8px;top:220.6px;font-size:37.44px;line-height:48.67px;color:#8b8b8b;letter-spacing:1.350px;">Line</div>
<svg class="ic" style="left:1915.0px;top:226.0px" width="33.0" height="36.0" viewBox="0 0 33 36" preserveAspectRatio="none" ><path d="M16.5 1 V33 M2 19.5 L16.5 34 L31 19.5" stroke="#8b8b8b" stroke-width="2.9" fill="none"/></svg>
<div class="t " style="left:2039.6px;top:220.6px;font-size:37.44px;line-height:48.67px;color:#8b8b8b;letter-spacing:0.902px;">File</div>
<div class="t " style="left:2759.2px;top:220.6px;font-size:37.44px;line-height:48.67px;color:#8b8b8b;letter-spacing:1.253px;">Message</div>
<div class="bx" style="left:1713px;top:672.1px;width:1509px;height:62.8px;background:#04395e"></div>
<svg class="ic" style="left:1785.8px;top:308.0px" width="17.4" height="30.0" viewBox="0 0 17.4 30" preserveAspectRatio="none" ><path d="M2 2 L15 15 L2 28" stroke="#ccc" stroke-width="2.5" fill="none"/></svg>
<div class="t " style="left:1832.6px;top:300.6px;font-size:37.44px;line-height:48.67px;color:#ccc;letter-spacing:0.782px;">Missing Zero Address Check</div>
<div class="t " style="left:2346.3px;top:300.6px;font-size:37.44px;line-height:48.67px;color:#8b8b8b;letter-spacing:0.856px;">Missing_Zero_Address_Check</div>
<div class="badge" style="left:2895.2px;top:297.1px;width:69.5px">48</div>
<svg class="ic" style="left:1778.0px;top:379.6px" width="30.7" height="17.6" viewBox="0 0 30.7 17.6" preserveAspectRatio="none" ><path d="M2 2 L15.35 15.2 L28.7 2" stroke="#ccc" stroke-width="2.5" fill="none"/></svg>
<div class="t " style="left:1832.8px;top:364.0px;font-size:37.44px;line-height:48.67px;color:#ccc;letter-spacing:0.781px;">Use of transfer or send on a payable address</div>
<div class="bx" style="left:2623px;top:355.3px;width:599px;height:63px;overflow:hidden">
<div class="t" style="left:7.5px;top:8.7px;font-size:37.44px;line-height:48.67px;color:#8b8b8b;letter-spacing:0.873px">Use_of_transfer_or_send_on_a_payable_address</div>
</div>
<svg class="ic" style="left:1836.3px;top:428.9px" width="41.5" height="38.4" viewBox="0 0 43 39" preserveAspectRatio="none" ><path d="M21.5 2.5 L41 37 H2 Z" stroke="#cca700" stroke-width="2.9" fill="none" stroke-linejoin="round"/><path d="M21.5 15 V27" stroke="#cca700" stroke-width="3.2"/><rect x="19.8" y="29.6" width="3.4" height="3.4" fill="#cca700"/></svg>
<div class="t " style="left:1897.2px;top:425.2px;font-size:39.60px;line-height:51.48px;color:#ccc;letter-spacing:-2.905px;">31</div>
<div class="t " style="left:2039.0px;top:427.3px;font-size:37.44px;line-height:48.67px;color:#ccc;letter-spacing:0.401px;">IFlashLoanEtherReceiver.sol</div>
<div class="bx" style="left:2752px;top:418.6px;width:470px;height:63px;overflow:hidden">
<div class="t " style="left:7.4px;top:8.7px;font-size:37.44px;line-height:48.67px;color:#ccc;letter-spacing:0.781px;">Use of transfer or send on a payable address</div>
</div>
<svg class="ic" style="left:1836.3px;top:492.3px" width="41.5" height="38.4" viewBox="0 0 43 39" preserveAspectRatio="none" ><path d="M21.5 2.5 L41 37 H2 Z" stroke="#cca700" stroke-width="2.9" fill="none" stroke-linejoin="round"/><path d="M21.5 15 V27" stroke="#cca700" stroke-width="3.2"/><rect x="19.8" y="29.6" width="3.4" height="3.4" fill="#cca700"/></svg>
<div class="t " style="left:1896.7px;top:488.5px;font-size:39.60px;line-height:51.48px;color:#ccc;letter-spacing:1.742px;">235</div>
<div class="t " style="left:2039.4px;top:490.7px;font-size:37.44px;line-height:48.67px;color:#ccc;letter-spacing:0.581px;">FakeMaster.sol</div>
<div class="bx" style="left:2752px;top:482.0px;width:470px;height:63px;overflow:hidden">
<div class="t " style="left:7.4px;top:8.7px;font-size:37.44px;line-height:48.67px;color:#ccc;letter-spacing:0.781px;">Use of transfer or send on a payable address</div>
</div>
<svg class="ic" style="left:1785.8px;top:561.4px" width="17.4" height="30.0" viewBox="0 0 17.4 30" preserveAspectRatio="none" ><path d="M2 2 L15 15 L2 28" stroke="#ccc" stroke-width="2.5" fill="none"/></svg>
<div class="t " style="left:1832.8px;top:554.0px;font-size:37.44px;line-height:48.67px;color:#ccc;letter-spacing:1.100px;">Unbound Loop</div>
<div class="t " style="left:2106.2px;top:554.0px;font-size:37.44px;line-height:48.67px;color:#8b8b8b;letter-spacing:1.271px;">Unbound_Loop</div>
<div class="badge" style="left:2392.5px;top:550.5px;width:52.6px">2</div>
<svg class="ic" style="left:1778.0px;top:633.0px" width="30.7" height="17.6" viewBox="0 0 30.7 17.6" preserveAspectRatio="none" ><path d="M2 2 L15.35 15.2 L28.7 2" stroke="#ccc" stroke-width="2.5" fill="none"/></svg>
<div class="t " style="left:1832.6px;top:617.4px;font-size:37.44px;line-height:48.67px;color:#ccc;letter-spacing:0.708px;">Missing Reentracy Guard</div>
<div class="t " style="left:2285.2px;top:617.4px;font-size:37.44px;line-height:48.67px;color:#8b8b8b;letter-spacing:0.711px;">Missing_Reentracy_Guard</div>
<div class="badge" style="left:2760.3px;top:613.9px;width:52.3px">1</div>
<svg class="ic" style="left:1836.0px;top:683.6px" width="41.0" height="41.0" viewBox="0 0 41 41" preserveAspectRatio="none" ><circle cx="20.5" cy="20.5" r="18.5" stroke="#3794ff" stroke-width="2.9" fill="none"/><path d="M20.5 17.5 V29.5" stroke="#3794ff" stroke-width="3.2"/><rect x="18.8" y="11" width="3.4" height="3.6" fill="#3794ff"/></svg>
<div class="t " style="left:1897.8px;top:678.6px;font-size:39.60px;line-height:51.48px;color:#ccc;letter-spacing:2.782px;">48</div>
<div class="t " style="left:2040.8px;top:680.8px;font-size:37.44px;line-height:48.67px;color:#ccc;letter-spacing:0.734px;">SimpleGovernance.sol</div>
<div class="t " style="left:2759.2px;top:680.8px;font-size:37.44px;line-height:48.67px;color:#ccc;letter-spacing:0.776px;">Missing Reentracy Guard</div>
<div class="bx" style="left:1713px;top:939.1px;width:1205px;height:27.8px;background:#434343"></div>
<div class="bx" style="left:1713px;top:966.9px;width:1509px;height:2.9px;background:#2b2b2b"></div>
<div class="t " style="left:1774.3px;top:1000.7px;font-size:31.68px;line-height:41.18px;color:#d8d8d8;letter-spacing:0.655px;">INFO</div>
<div class="bx" style="left:1775.8px;top:1058.4px;width:76.2px;height:2.5px;background:#e0e0e0"></div>
<div class="t " style="left:1910.1px;top:1000.7px;font-size:31.68px;line-height:41.18px;color:#9d9d9d;letter-spacing:-0.562px;">ANALYSIS STEPS</div>
<div class="badge" style="left:2187.9px;top:995.2px;width:51.8px">0</div>
<div class="t " style="left:2296.8px;top:1000.7px;font-size:31.68px;line-height:41.18px;color:#9d9d9d;letter-spacing:-0.812px;">STACKS</div>
<div class="badge" style="left:2436.6px;top:995.2px;width:51.8px">0</div>
<div class="bx" style="left:3194px;top:1070px;width:28.5px;height:814.5px;background:#434343"></div>
<div class="t " style="left:1775.2px;top:1103.4px;font-size:37.44px;line-height:48.67px;color:#ccc;letter-spacing:0.694px;">Missing Reentracy Guard</div>
<div class="t " style="left:1775.2px;top:1192.7px;font-size:37.44px;line-height:48.67px;color:#8b8b8b;letter-spacing:0.260px;">Rule Id</div>
<div class="t " style="left:2160.8px;top:1192.7px;font-size:37.44px;line-height:48.67px;color:#4daafc;letter-spacing:0.697px;text-decoration:underline;text-decoration-thickness:2.3px;text-underline-offset:3.6px;">Missing_Reentracy_Guard</div>
<div class="t " style="left:1775.2px;top:1248.2px;font-size:37.44px;line-height:48.67px;color:#8b8b8b;letter-spacing:0.145px;">Rule Name</div>
<div class="t " style="left:2160.8px;top:1248.2px;font-size:37.44px;line-height:48.67px;color:#ccc;letter-spacing:0.735px;">Missing Reentracy Guard</div>
<div class="t " style="left:1775.2px;top:1304.2px;font-size:37.44px;line-height:48.67px;color:#8b8b8b;letter-spacing:0.902px;">Rule Description</div>
<div class="t " style="left:2161.2px;top:1304.2px;font-size:37.44px;line-height:48.67px;color:#ccc;letter-spacing:1.075px;">In Solidity, contracts often interact with external</div>
<div class="t " style="left:2161.2px;top:1348.2px;font-size:37.44px;line-height:48.67px;color:#ccc;letter-spacing:0.796px;">addresses. Failing to check for a possible 0 address</div>
<div class="t " style="left:2161.2px;top:1392.3px;font-size:37.44px;line-height:48.67px;color:#ccc;letter-spacing:1.011px;">input (especially in constructors, setters, and initializer</div>
<div class="t " style="left:2161.2px;top:1436.3px;font-size:37.44px;line-height:48.67px;color:#ccc;letter-spacing:1.099px;">functions) before such interactions can lead to</div>
<div class="t " style="left:2161.2px;top:1480.4px;font-size:37.44px;line-height:48.67px;color:#ccc;letter-spacing:0.799px;">unexpected dangerous behavior. A zero address check</div>
<div class="t " style="left:2161.2px;top:1524.4px;font-size:37.44px;line-height:48.67px;color:#ccc;letter-spacing:0.890px;">ensures that addresses are explicitly provided and not</div>
<div class="t " style="left:2161.2px;top:1568.5px;font-size:37.44px;line-height:48.67px;color:#ccc;letter-spacing:0.993px;">left uninitialized or set to a default, invalid state.</div>
<div class="t " style="left:1775.2px;top:1622.7px;font-size:37.44px;line-height:48.67px;color:#8b8b8b;letter-spacing:0.943px;">Level</div>
<div class="t " style="left:2161.2px;top:1622.7px;font-size:37.44px;line-height:48.67px;color:#ccc;letter-spacing:2.532px;">note</div>
<div class="t " style="left:1775.2px;top:1678.4px;font-size:37.44px;line-height:48.67px;color:#8b8b8b;letter-spacing:1.750px;">Kind</div>
<div class="t " style="left:2162.2px;top:1678.4px;font-size:37.44px;line-height:48.67px;color:#ccc;letter-spacing:0.000px;transform:scaleX(0.8);transform-origin:0 0;">—</div>
<div class="t " style="left:1775.2px;top:1734.1px;font-size:37.44px;line-height:48.67px;color:#8b8b8b;letter-spacing:0.692px;">Baseline State</div>
<div class="t " style="left:2161.2px;top:1734.1px;font-size:37.44px;line-height:48.67px;color:#ccc;letter-spacing:1.513px;">new</div>
<div class="t " style="left:1775.2px;top:1789.8px;font-size:37.44px;line-height:48.67px;color:#8b8b8b;letter-spacing:1.232px;">Locations</div>
<div class="t " style="left:2161.2px;top:1789.8px;font-size:37.44px;line-height:48.67px;color:#4daafc;letter-spacing:0.797px;">SimpleGovernance.sol</div>
<div class="t " style="left:1775.2px;top:1845.5px;font-size:37.44px;line-height:48.67px;color:#8b8b8b;letter-spacing:2.359px;">Log</div>
<div class="t " style="left:2161.2px;top:1845.5px;font-size:37.44px;line-height:48.67px;color:#4daafc;letter-spacing:1.474px;">eburger-output.sarif</div>
<div class="bx" style="left:3222px;top:0;width:2px;height:1930px;background:#2b2b2b"></div>
<!-- status bar (cropped) -->
<div class="bx" style="left:0;top:1930px;width:3224px;height:2.6px;background:#2b2b2b"></div>
<div class="bx" style="left:0;top:1932.6px;width:3224px;height:18px;background:#181818"></div>
<svg class="ic" style="left:145.7px;top:1941.7px" width="30.0" height="30.0" viewBox="0 0 30 30" preserveAspectRatio="none" ><circle cx="15" cy="15" r="13" stroke="#ccc" stroke-width="2.9" fill="none"/></svg>
<svg class="ic" style="left:225.3px;top:1941.7px" width="30.0" height="30.0" viewBox="0 0 30 30" preserveAspectRatio="none" ><circle cx="15" cy="15" r="13" stroke="#ccc" stroke-width="2.9" fill="none"/></svg>
<svg class="ic" style="left:389.2px;top:1941.7px" width="30.0" height="30.0" viewBox="0 0 30 30" preserveAspectRatio="none" ><circle cx="15" cy="15" r="13" stroke="#ccc" stroke-width="2.9" fill="none"/></svg>
<svg class="ic" style="left:3143.4px;top:1941.7px" width="30.0" height="30.0" viewBox="0 0 30 30" preserveAspectRatio="none" ><circle cx="15" cy="15" r="13" stroke="#ccc" stroke-width="2.9" fill="none"/></svg>
<svg class="ic" style="left:274.5px;top:1943.5px" width="16.0" height="24.0" viewBox="0 0 16 24" preserveAspectRatio="none" ><ellipse cx="8" cy="12" rx="6" ry="10" stroke="#ccc" stroke-width="3" fill="none"/></svg>
<svg class="ic" style="left:355.6px;top:1943.5px" width="16.0" height="24.0" viewBox="0 0 16 24" preserveAspectRatio="none" ><ellipse cx="8" cy="12" rx="6" ry="10" stroke="#ccc" stroke-width="3" fill="none"/></svg>
<svg class="ic" style="left:436.8px;top:1943.5px" width="16.0" height="24.0" viewBox="0 0 16 24" preserveAspectRatio="none" ><ellipse cx="8" cy="12" rx="6" ry="10" stroke="#ccc" stroke-width="3" fill="none"/></svg>
<svg class="ic" style="left:557.0px;top:1943.5px" width="16.0" height="24.0" viewBox="0 0 16 24" preserveAspectRatio="none" ><ellipse cx="8" cy="12" rx="6" ry="10" stroke="#ccc" stroke-width="3" fill="none"/></svg>
<svg class="ic" style="left:674.0px;top:1943.5px" width="16.0" height="24.0" viewBox="0 0 16 24" preserveAspectRatio="none" ><ellipse cx="8" cy="12" rx="6" ry="10" stroke="#ccc" stroke-width="3" fill="none"/></svg>
<svg class="ic" style="left:307.4px;top:1941.5px" width="28.0" height="26.0" viewBox="0 0 28 26" preserveAspectRatio="none" ><path d="M14 2.5 L26 25 H2 Z" stroke="#ccc" stroke-width="2.9" fill="none" stroke-linejoin="round"/></svg>
<svg class="ic" style="left:502.7px;top:1941.5px" width="40.0" height="30.0" viewBox="0 0 40 30" preserveAspectRatio="none" ><path d="M12 3 Q4 15 12 27 M28 3 Q36 15 28 27 M17 8 Q13 15 17 22 M23 8 Q27 15 23 22" stroke="#ccc" stroke-width="2.6" fill="none"/></svg>
<svg class="ic" style="left:625.6px;top:1942.5px" width="28.0" height="30.0" viewBox="0 0 28 30" preserveAspectRatio="none" ><path d="M14 2 L26 6 V16 Q26 24 14 29 Q2 24 2 16 V6 Z" stroke="#ccc" stroke-width="2.9" fill="none" stroke-linejoin="round"/></svg>
<div class="bx" style="left:3071px;top:1941px;width:2.9px;height:9px;background:#ccc"></div>
<div class="bx" style="left:5px;top:1946px;width:9px;height:3px;background:#ccc"></div>
<div class="bx" style="left:82px;top:1944.5px;width:4px;height:4px;border-radius:2px;background:#ccc"></div>
<div class="bx" style="left:112px;top:1944.5px;width:4px;height:4px;border-radius:2px;background:#ccc"></div>
<div class="bx" style="left:733px;top:1946px;width:3px;height:4px;background:#ccc"></div>
<div class="bx" style="left:741px;top:1946px;width:3px;height:4px;background:#ccc"></div>
</body></html>
